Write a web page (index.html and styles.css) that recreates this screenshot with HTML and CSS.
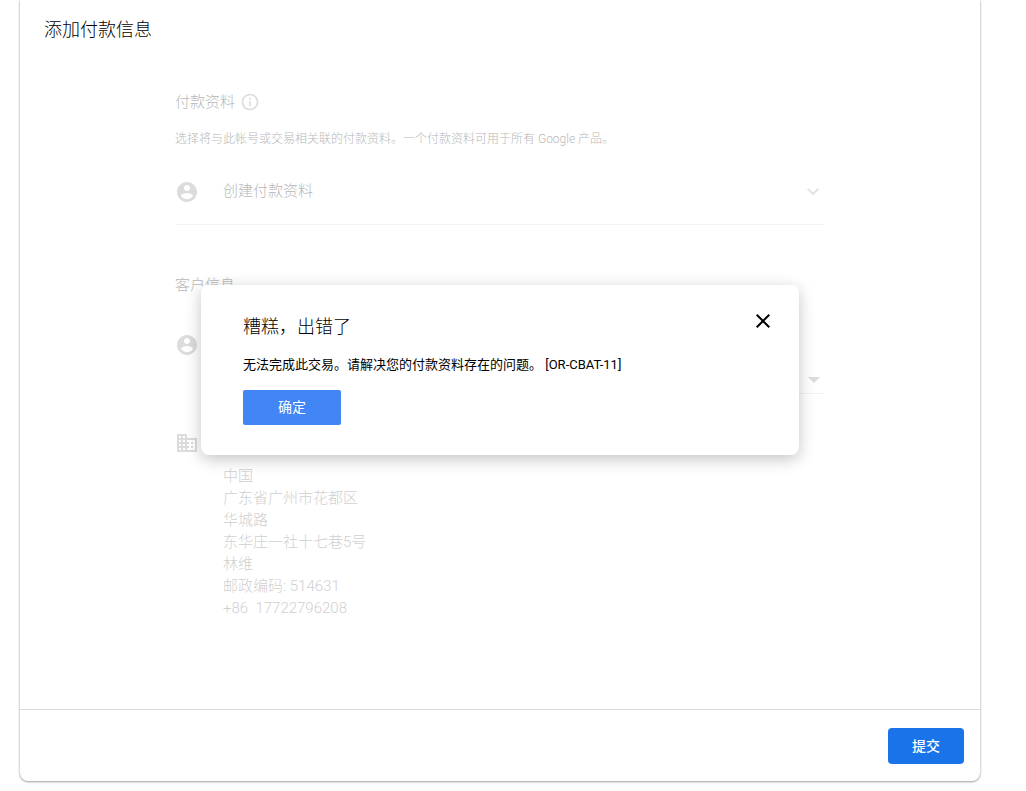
FILE: index.html
```html
<!DOCTYPE html>
<html lang="zh-CN">
<head>
<meta charset="utf-8">
<meta name="viewport" content="width=device-width, initial-scale=1">
<title>添加付款信息</title>
<link rel="stylesheet" href="styles.css">
</head>
<body>
<main class="panel">
  <h1 class="panel-title">添加付款信息</h1>
  <div class="content">
    <section class="profile">
      <h2 class="section-title">付款资料
        <svg class="info-icon" viewBox="0 0 24 24" aria-hidden="true"><path d="M11 17h2v-6h-2v6zm1-15C6.48 2 2 6.48 2 12s4.48 10 10 10 10-4.48 10-10S17.52 2 12 2zm0 18c-4.41 0-8-3.59-8-8s3.59-8 8-8 8 3.59 8 8-3.59 8-8 8zM11 9h2V7h-2v2z"/></svg>
      </h2>
      <p class="description">选择将与此帐号或交易相关联的付款资料。一个付款资料可用于所有 Google 产品。</p>
      <button class="profile-picker" type="button">
        <svg class="row-icon" viewBox="0 0 24 24" aria-hidden="true"><path d="M12 2C6.48 2 2 6.48 2 12s4.48 10 10 10 10-4.48 10-10S17.52 2 12 2zm0 3c1.66 0 3 1.34 3 3s-1.34 3-3 3-3-1.34-3-3 1.34-3 3-3zm0 14.2c-2.5 0-4.71-1.28-6-3.22.03-1.99 4-3.08 6-3.08 1.99 0 5.97 1.09 6 3.08-1.29 1.94-3.5 3.22-6 3.22z"/></svg>
        <span class="picker-label">创建付款资料</span>
        <svg class="chevron" viewBox="0 0 24 24" aria-hidden="true"><path d="M7.41 8L12 12.59 16.59 8 18 9.41l-6 6-6-6z"/></svg>
      </button>
    </section>
    <section class="customer">
      <h2 class="section-title" id="customer-label">客户信息</h2>
      <div class="account-row">
        <svg class="row-icon" viewBox="0 0 24 24" aria-hidden="true"><path d="M12 2C6.48 2 2 6.48 2 12s4.48 10 10 10 10-4.48 10-10S17.52 2 12 2zm0 3c1.66 0 3 1.34 3 3s-1.34 3-3 3-3-1.34-3-3 1.34-3 3-3zm0 14.2c-2.5 0-4.71-1.28-6-3.22.03-1.99 4-3.08 6-3.08 1.99 0 5.97 1.09 6 3.08-1.29 1.94-3.5 3.22-6 3.22z"/></svg>
        <div class="select-wrap">
          <select class="account-select" aria-labelledby="customer-label"></select>
          <svg class="caret" viewBox="0 0 10 5" aria-hidden="true"><path d="M0 0h10L5 5z"/></svg>
        </div>
      </div>
      <div class="address-row">
        <svg class="row-icon" viewBox="0 0 24 24" aria-hidden="true"><path d="M12 7V3H2v18h20V7H12zM6 19H4v-2h2v2zm0-4H4v-2h2v2zm0-4H4V9h2v2zm0-4H4V5h2v2zm4 12H8v-2h2v2zm0-4H8v-2h2v2zm0-4H8V9h2v2zm0-4H8V5h2v2zm10 12h-8v-2h2v-2h-2v-2h2v-2h-2V9h8v10zm-2-8h-2v2h2v-2zm0 4h-2v2h2v-2z"/></svg>
        <address class="address">中国<br>广东省广州市花都区<br>华城路<br>东华庄一社十七巷5号<br>林维<br>邮政编码: 514631<br>+86&nbsp; 17722796208</address>
      </div>
    </section>
  </div>
  <footer class="panel-footer">
    <button class="submit" type="button">提交</button>
  </footer>
  <div class="dialog" role="dialog" aria-labelledby="dialog-title">
    <div class="dialog-head">
      <h2 class="dialog-title" id="dialog-title">糟糕，出错了</h2>
      <button class="close" type="button" aria-label="关闭">
        <svg class="close-icon" viewBox="0 0 24 24" aria-hidden="true"><path d="M19 6.41L17.59 5 12 10.59 6.41 5 5 6.41 10.59 12 5 17.59 6.41 19 12 13.41 17.59 19 19 17.59 13.41 12z"/></svg>
      </button>
    </div>
    <p class="dialog-text">无法完成此交易。请解决您的付款资料存在的问题。 [OR-CBAT-11]</p>
    <button class="confirm" type="button">确定</button>
  </div>
</main>
</body>
</html>
```
FILE: styles.css
```css
* {
  box-sizing: border-box;
}

body {
  margin: 0;
  background: #fff;
  color: #000;
  font-family: Roboto, "Noto Sans CJK SC", sans-serif;
  font-weight: 300;
}

h1, h2, p {
  margin: 0;
  font-weight: 300;
}

button {
  border: 0;
  font-family: inherit;
  cursor: pointer;
}

svg {
  display: block;
  flex: none;
  fill: currentColor;
}

.panel {
  position: relative;
  margin: 0 46px 10px 20px;
  border-radius: 0 0 8px 8px;
  box-shadow: 0 1px 2px rgba(60, 64, 67, 0.4), 0 0 3px rgba(60, 64, 67, 0.25);
}

.panel-title {
  padding: 17px 24px 0;
  font-size: 18px;
  line-height: 26px;
}

.content {
  max-width: 650px;
  margin: 0 auto;
  padding: 47px 0 90px;
  color: #b8b8b8;
}

.section-title {
  display: flex;
  align-items: center;
  gap: 5px;
  font-size: 15px;
  line-height: 24px;
}

.info-icon {
  width: 20px;
  height: 20px;
  color: #dcdcdc;
}

.description {
  padding-top: 15px;
  font-size: 12px;
  line-height: 20px;
}

.profile-picker {
  display: flex;
  align-items: center;
  gap: 24px;
  width: 100%;
  height: 66px;
  margin-top: 10px;
  padding: 0;
  border-bottom: 1px solid #f3f3f3;
  background: none;
  color: inherit;
  font-size: 15px;
  font-weight: 300;
  line-height: 20px;
  text-align: left;
}

.row-icon {
  width: 24px;
  height: 24px;
  color: #dcdcdc;
}

.picker-label {
  flex: 1;
  padding-bottom: 2px;
}

.chevron {
  width: 24px;
  height: 24px;
  color: #e4e4e4;
}

.customer {
  padding-top: 48px;
}

.account-row {
  display: flex;
  gap: 24px;
  padding-top: 36px;
}

.select-wrap {
  display: flex;
  flex: 1;
  align-items: flex-end;
  height: 61px;
  padding-right: 5px;
  padding-bottom: 10px;
  border-bottom: 1px solid #f3f3f3;
}

.account-select {
  flex: 1;
  border: 0;
  background: none;
  appearance: none;
}

.caret {
  width: 12px;
  height: 6px;
  color: #dcdcdc;
}

.address-row {
  display: flex;
  gap: 24px;
  padding-top: 37px;
}

.address {
  padding-top: 34px;
  color: #d0d0d0;
  font-size: 15px;
  font-style: normal;
  line-height: 22px;
}

.panel-footer {
  display: flex;
  justify-content: flex-end;
  padding: 18px 16px 17px;
  border-top: 1px solid #dadada;
}

.submit {
  min-width: 76px;
  height: 36px;
  padding: 0 16px 3px;
  border-radius: 4px;
  background: #1a73e8;
  color: #fff;
  font-size: 14px;
  font-weight: 500;
}

.dialog {
  position: absolute;
  top: 285px;
  left: 0;
  right: 0;
  max-width: 598px;
  margin: 0 auto;
  padding: 24px 24px 30px 42px;
  border-radius: 8px;
  background: #fff;
  box-shadow: 0 4px 16px rgba(0, 0, 0, 0.24);
}

.dialog-head {
  display: flex;
  justify-content: space-between;
  align-items: flex-start;
}

.dialog-title {
  padding-top: 5px;
  font-size: 18px;
  line-height: 26px;
}

.close {
  padding: 0;
  background: none;
  color: #000;
}

.close-icon {
  width: 24px;
  height: 24px;
}

.dialog-text {
  padding-top: 15px;
  color: #000;
  font-size: 13px;
  font-weight: 400;
  line-height: 20px;
}

.confirm {
  display: block;
  min-width: 98px;
  height: 35px;
  margin-top: 15px;
  padding: 0 16px 3px;
  border-radius: 2px;
  background: #4285f4;
  color: #fff;
  font-size: 14px;
  font-weight: 400;
}
```
